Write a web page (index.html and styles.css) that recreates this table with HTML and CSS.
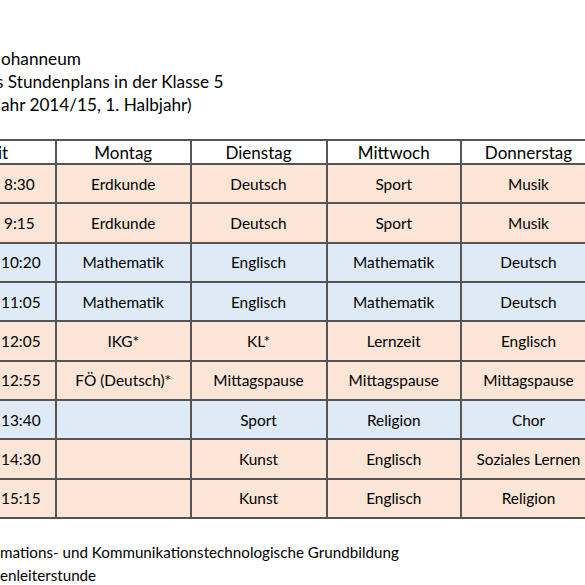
FILE: index.html
```html
<!DOCTYPE html>
<html lang="de">
<head>
<meta charset="utf-8">
<title>Stundenplan Klasse 5</title>
<link rel="stylesheet" href="styles.css">
</head>
<body>
<div class="doc">
  <div class="title">
    <div class="line">ohanneum</div>
    <div class="line cut">s Stundenplans in der Klasse 5</div>
    <div class="line">ahr 2014/15, 1. Halbjahr)</div>
  </div>

  <div class="plan">
    <div class="cell head zeit">it</div>
    <div class="cell head">Montag</div>
    <div class="cell head">Dienstag</div>
    <div class="cell head">Mittwoch</div>
    <div class="cell head">Donnerstag</div>

    <div class="cell peach zeit short">8:30</div>
    <div class="cell peach">Erdkunde</div>
    <div class="cell peach">Deutsch</div>
    <div class="cell peach">Sport</div>
    <div class="cell peach">Musik</div>

    <div class="cell peach zeit short">9:15</div>
    <div class="cell peach">Erdkunde</div>
    <div class="cell peach">Deutsch</div>
    <div class="cell peach">Sport</div>
    <div class="cell peach">Musik</div>

    <div class="cell blue zeit">10:20</div>
    <div class="cell blue">Mathematik</div>
    <div class="cell blue">Englisch</div>
    <div class="cell blue">Mathematik</div>
    <div class="cell blue">Deutsch</div>

    <div class="cell blue zeit">11:05</div>
    <div class="cell blue">Mathematik</div>
    <div class="cell blue">Englisch</div>
    <div class="cell blue">Mathematik</div>
    <div class="cell blue">Deutsch</div>

    <div class="cell peach zeit">12:05</div>
    <div class="cell peach">IKG*</div>
    <div class="cell peach">KL*</div>
    <div class="cell peach">Lernzeit</div>
    <div class="cell peach">Englisch</div>

    <div class="cell peach zeit">12:55</div>
    <div class="cell peach">FÖ (Deutsch)*</div>
    <div class="cell peach">Mittagspause</div>
    <div class="cell peach">Mittagspause</div>
    <div class="cell peach">Mittagspause</div>

    <div class="cell blue zeit">13:40</div>
    <div class="cell blue"></div>
    <div class="cell blue">Sport</div>
    <div class="cell blue">Religion</div>
    <div class="cell blue">Chor</div>

    <div class="cell peach zeit">14:30</div>
    <div class="cell peach"></div>
    <div class="cell peach">Kunst</div>
    <div class="cell peach">Englisch</div>
    <div class="cell peach">Soziales Lernen</div>

    <div class="cell peach zeit">15:15</div>
    <div class="cell peach"></div>
    <div class="cell peach">Kunst</div>
    <div class="cell peach">Englisch</div>
    <div class="cell peach">Religion</div>
  </div>

  <div class="notes">
    <div class="line">mations- und Kommunikationstechnologische Grundbildung</div>
    <div class="line">enleiterstunde</div>
  </div>
</div>
</body>
</html>
```

FILE: styles.css
```css
html, body {
  margin: 0;
  padding: 0;
  overflow: hidden;
  background: #ffffff;
}

body {
  font-family: Lato, "Open Sans", sans-serif;
  color: #000000;
  width: 585px;
  height: 585px;
}

.doc {
  padding-top: 47px;
}

.title {
  font-size: 17.2px;
  line-height: 23px;
  white-space: nowrap;
}

.title .line {
  padding-left: 1px;
}

.title .cut {
  margin-left: -5px;
}

.plan {
  margin-top: 23px;
  margin-left: -60px;
  width: max-content;
  display: grid;
  grid-template-columns: 113px 132.5px 134px 132.5px 133px;
  grid-template-rows: 22px repeat(9, 37.33px);
  gap: 2px;
  padding: 2px;
  background: #555555;
}

.cell {
  display: flex;
  align-items: center;
  justify-content: center;
  font-size: 15.4px;
  white-space: nowrap;
  overflow: hidden;
}

.head {
  background: #ffffff;
  font-size: 17px;
}

.peach {
  background: #fbe5d6;
}

.blue {
  background: #deebf7;
}

.zeit {
  justify-content: flex-start;
  padding-left: 59px;
}

.head.zeit {
  padding-left: 56px;
}

.zeit.short {
  padding-left: 62px;
}

.notes {
  margin-top: 22px;
  font-size: 15.2px;
  line-height: 23px;
  white-space: nowrap;
}
```
